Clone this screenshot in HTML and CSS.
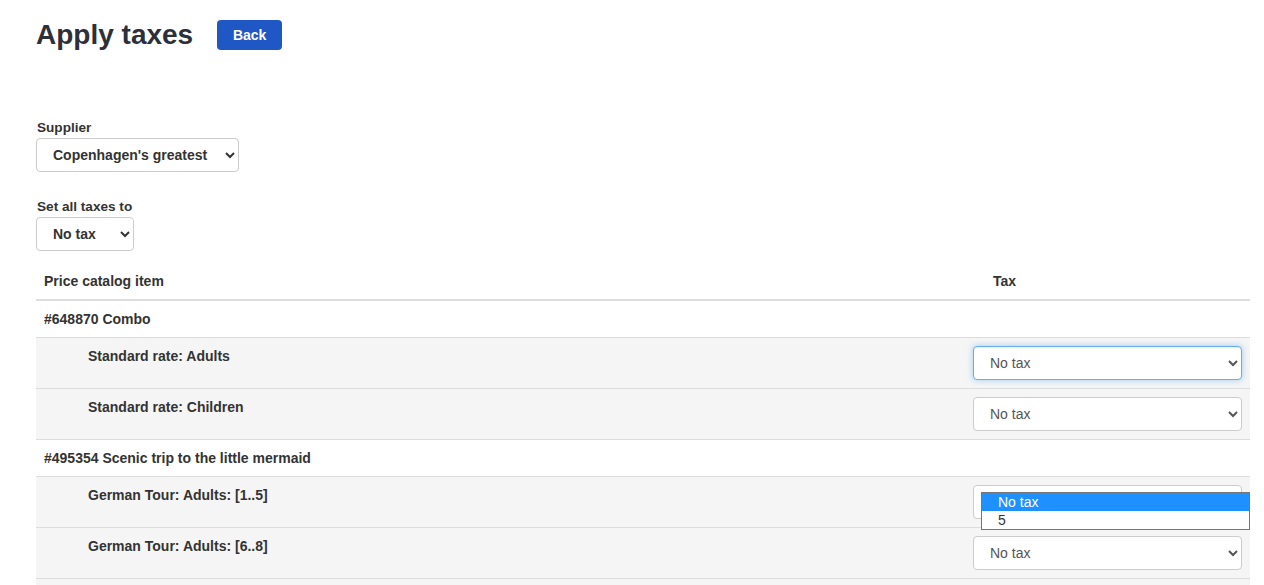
FILE: index.html
```html
<!DOCTYPE html>
<html>
<head>
<meta charset="utf-8">
<title>Apply taxes</title>
<link rel="stylesheet" href="styles.css">
</head>
<body>
<div class="page">
  <div class="title-row">
    <h1 class="title">Apply taxes</h1>
    <button class="btn-back">Back</button>
  </div>

  <div class="field supplier-field">
    <label class="field-label">Supplier</label>
    <select class="top-select supplier-select">
      <option>Copenhagen's greatest</option>
    </select>
  </div>

  <div class="field all-field">
    <label class="field-label">Set all taxes to</label>
    <select class="top-select all-select">
      <option>No tax</option>
      <option>5</option>
    </select>
  </div>

  <table class="tax-table">
    <thead>
      <tr>
        <th class="col-item">Price catalog item</th>
        <th class="col-tax">Tax</th>
      </tr>
    </thead>
    <tbody>
      <tr class="group-row">
        <td>#648870 Combo</td>
        <td></td>
      </tr>
      <tr class="sub-row">
        <td class="sub-name">Standard rate: Adults</td>
        <td class="tax-cell"><select class="tax-select focused"><option>No tax</option><option>5</option></select></td>
      </tr>
      <tr class="sub-row">
        <td class="sub-name">Standard rate: Children</td>
        <td class="tax-cell"><select class="tax-select"><option>No tax</option><option>5</option></select></td>
      </tr>
      <tr class="group-row">
        <td>#495354 Scenic trip to the little mermaid</td>
        <td></td>
      </tr>
      <tr class="sub-row">
        <td class="sub-name">German Tour: Adults: [1..5]</td>
        <td class="tax-cell">
          <div class="select-wrap">
            <select class="tax-select"><option>No tax</option><option>5</option></select>
            <div class="dropdown-list">
              <div class="dropdown-item active">No tax</div>
              <div class="dropdown-item">5</div>
            </div>
          </div>
        </td>
      </tr>
      <tr class="sub-row">
        <td class="sub-name">German Tour: Adults: [6..8]</td>
        <td class="tax-cell"><select class="tax-select"><option>No tax</option><option>5</option></select></td>
      </tr>
      <tr class="sub-row last-row">
        <td class="sub-name"></td>
        <td class="tax-cell"><div class="select-spacer"></div></td>
      </tr>
    </tbody>
  </table>
</div>
</body>
</html>
```

FILE: styles.css
```css
* { box-sizing: border-box; }

html, body {
  margin: 0;
  padding: 0;
  background: #fff;
}

body {
  font-family: "Liberation Sans", Arial, sans-serif;
  color: #333;
  font-size: 14px;
  line-height: 1.42857;
  overflow: hidden;
}

.page {
  padding: 20px 14px 0 36px;
}

.title-row {
  display: flex;
  align-items: center;
  gap: 24px;
  height: 30px;
}

.title {
  margin: 0;
  font-size: 28px;
  font-weight: bold;
  line-height: 30px;
  color: #2d3039;
}

.btn-back {
  width: 65px;
  height: 30px;
  border: none;
  border-radius: 4px;
  background: #1f57c4;
  color: #fff;
  font-family: "Liberation Sans", Arial, sans-serif;
  font-weight: bold;
  font-size: 14px;
  padding: 0;
  cursor: pointer;
}

.field {
  display: flex;
  flex-direction: column;
  align-items: flex-start;
}

.supplier-field { margin-top: 69px; }
.all-field { margin-top: 26px; }

.field-label {
  display: block;
  font-weight: bold;
  font-size: 13.6px;
  line-height: 18px;
  margin: 0 0 1px 1px;
  color: #333;
}

.top-select {
  height: 34px;
  border: 1px solid #ccc;
  border-radius: 4px;
  background: #fff;
  font-family: "Liberation Sans", Arial, sans-serif;
  font-weight: bold;
  font-size: 14px;
  color: #333;
  padding: 6px 8px 6px 12px;
}

.supplier-select { width: 203px; }
.all-select { width: 98px; }

.tax-table {
  margin-top: 12px;
  width: 1214px;
  border-collapse: collapse;
  border-spacing: 0;
}

.tax-table th,
.tax-table td {
  padding: 8px;
  text-align: left;
  vertical-align: top;
  font-weight: bold;
  font-size: 14px;
  line-height: 20px;
}

.tax-table thead th {
  border-bottom: 2px solid #ddd;
}

.col-tax {
  width: 285px;
  padding-left: 28px !important;
}

.tax-table tbody tr {
  border-top: 1px solid #ddd;
}

.tax-table tbody tr:first-child { border-top: none; }

.sub-row td {
  background: #f5f5f5;
}

.sub-name {
  padding-left: 52px !important;
}

.tax-cell {
  padding: 8px !important;
}

.select-wrap {
  position: relative;
}

.select-spacer {
  height: 34px;
}

.tax-select {
  display: block;
  width: 269px;
  height: 34px;
  border: 1px solid #ccc;
  border-radius: 4px;
  background: #fff;
  font-family: "Liberation Sans", Arial, sans-serif;
  font-weight: normal;
  font-size: 14px;
  color: #555;
  padding: 6px 8px 6px 12px;
}

.tax-select.focused {
  border-color: #66afe9;
  box-shadow: inset 0 1px 1px rgba(0,0,0,.075), 0 0 6px rgba(102,175,233,.6);
}

.dropdown-list {
  position: absolute;
  top: 7px;
  left: 8px;
  width: 269px;
  border: 1px solid #767676;
  background: #fff;
  font-weight: normal;
  font-size: 14px;
  line-height: 18px;
  z-index: 5;
}

.dropdown-item {
  height: 18px;
  padding-left: 16px;
  color: #333;
}

.dropdown-item.active {
  background: #1e90ff;
  color: #fff;
}
```
